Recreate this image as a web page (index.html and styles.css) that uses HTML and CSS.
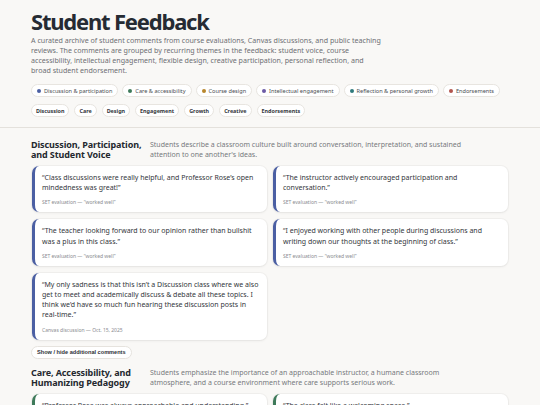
FILE: index.html
```html
<!DOCTYPE html>
<html lang="en">
<head>
    <meta charset="UTF-8">
    <title>Student Feedback</title>
    <link rel="stylesheet" href="styles.css">
</head>
<body>
    <header class="page-header">
        <h1>Student Feedback</h1>
        <p class="intro">A curated archive of student comments from course evaluations, Canvas discussions, and public teaching reviews. The comments are grouped by recurring themes in the feedback: student voice, course accessibility, intellectual engagement, flexible design, creative participation, personal reflection, and broad student endorsement.</p>
        <ul class="legend">
            <li class="chip"><span class="dot blue"></span>Discussion &amp; participation</li>
            <li class="chip"><span class="dot green"></span>Care &amp; accessibility</li>
            <li class="chip"><span class="dot gold"></span>Course design</li>
            <li class="chip"><span class="dot purple"></span>Intellectual engagement</li>
            <li class="chip"><span class="dot teal"></span>Reflection &amp; personal growth</li>
            <li class="chip"><span class="dot red"></span>Endorsements</li>
        </ul>
        <nav class="jump">
            <a href="#" class="chip bold">Discussion</a>
            <a href="#" class="chip bold">Care</a>
            <a href="#" class="chip bold">Design</a>
            <a href="#" class="chip bold">Engagement</a>
            <a href="#" class="chip bold">Growth</a>
            <a href="#" class="chip bold">Creative</a>
            <a href="#" class="chip bold">Endorsements</a>
        </nav>
    </header>

    <main>
        <section class="theme">
            <div class="theme-head">
                <h2>Discussion, Participation, and Student Voice</h2>
                <p>Students describe a classroom culture built around conversation, interpretation, and sustained attention to one another's ideas.</p>
            </div>
            <div class="cards">
                <blockquote class="card blue-edge">
                    <p>“Class discussions were really helpful, and Professor Rose’s open mindedness was great!”</p>
                    <cite>SET evaluation — “worked well”</cite>
                </blockquote>
                <blockquote class="card blue-edge">
                    <p>“The instructor actively encouraged participation and conversation.”</p>
                    <cite>SET evaluation — “worked well”</cite>
                </blockquote>
                <blockquote class="card blue-edge">
                    <p>“The teacher looking forward to our opinion rather than bullshit was a plus in this class.”</p>
                    <cite>SET evaluation — “worked well”</cite>
                </blockquote>
                <blockquote class="card blue-edge">
                    <p>“I enjoyed working with other people during discussions and writing down our thoughts at the beginning of class.”</p>
                    <cite>SET evaluation — “worked well”</cite>
                </blockquote>
                <blockquote class="card blue-edge">
                    <p>“My only sadness is that this isn’t a Discussion class where we also get to meet and academically discuss &amp; debate all these topics. I think we’d have so much fun hearing these discussion posts in real-time.”</p>
                    <cite>Canvas discussion — Oct. 15, 2025</cite>
                </blockquote>
            </div>
            <button class="toggle">Show / hide additional comments</button>
        </section>

        <section class="theme">
            <div class="theme-head">
                <h2>Care, Accessibility, and Humanizing Pedagogy</h2>
                <p>Students emphasize the importance of an approachable instructor, a humane classroom atmosphere, and a course environment where care supports serious work.</p>
            </div>
            <div class="cards">
                <blockquote class="card green-edge">
                    <p>“Professor Rose was always approachable and understanding.”</p>
                    <cite>SET evaluation — “worked well”</cite>
                </blockquote>
                <blockquote class="card green-edge">
                    <p>“The class felt like a welcoming space.”</p>
                    <cite>SET evaluation — “worked well”</cite>
                </blockquote>
            </div>
        </section>
    </main>
</body>
</html>
```

FILE: styles.css
```css
body {
    margin: 0;
    font-family: "Noto Sans", sans-serif;
    color: #2a2d33;
    background-color: #f9f8f6;
}
.page-header {
    padding: 7px 31px 10px;
    border-bottom: 1px solid #e4e1dc;
}
h1 {
    margin: 0;
    font-size: 22px;
    line-height: 28px;
    font-weight: 700;
    color: #262b33;
    letter-spacing: -1.2px;
}
.intro {
    margin: 0 0 9px;
    max-width: 352px;
    font-size: 7.1px;
    line-height: 10px;
    color: #6d6f74;
}
.legend,
.jump {
    display: flex;
    flex-wrap: wrap;
    gap: 4px;
    list-style: none;
    margin: 0;
    padding: 0;
}
.legend {
    margin-bottom: 7px;
}
.jump {
    gap: 5px;
}
.chip {
    display: inline-flex;
    align-items: center;
    gap: 3px;
    height: 13px;
    padding: 0 5px;
    background-color: #fff;
    border: 1px solid #e8e5e0;
    border-radius: 7px;
    font-size: 5.6px;
    color: #4a4d52;
    text-decoration: none;
    box-sizing: border-box;
}
.chip.bold {
    font-weight: 700;
    font-size: 5.4px;
    color: #33363b;
    padding: 0 4px;
}
.dot {
    width: 4px;
    height: 4px;
    border-radius: 50%;
}
.blue { background-color: #4b5fa3; }
.green { background-color: #3e7a5a; }
.gold { background-color: #b8862c; }
.purple { background-color: #6c5aa6; }
.teal { background-color: #2f7a7c; }
.red { background-color: #b2544d; }

main {
    padding: 12px 31px 0;
}
.theme {
    margin-bottom: 9px;
}
.theme-head {
    display: grid;
    grid-template-columns: 119px 1fr;
    margin-bottom: 6px;
}
.theme-head h2 {
    margin: 0;
    font-size: 9px;
    line-height: 10px;
    font-weight: 700;
    color: #24282e;
    letter-spacing: -0.1px;
}
.theme-head p {
    margin: 0;
    max-width: 320px;
    font-size: 7px;
    line-height: 10px;
    color: #77797d;
}
.cards {
    display: grid;
    grid-template-columns: 235px 235px;
    gap: 7px 6px;
    align-items: start;
    margin-left: 1px;
}
.card {
    margin: 0;
    padding: 7px 8px 6px 7px;
    background-color: #fff;
    border-radius: 7px;
    border-left: 3px solid #4b5fa3;
    box-shadow: 0 1px 3px rgba(0, 0, 0, 0.06), 0 0 0 1px rgba(0, 0, 0, 0.03);
}
.green-edge {
    border-left-color: #3e7a5a;
}
.card p {
    margin: 0 0 5px;
    font-size: 7px;
    line-height: 10.2px;
    color: #33363b;
}
.card cite {
    display: block;
    font-style: normal;
    font-size: 5px;
    line-height: 8px;
    color: #8a8c90;
}
.toggle {
    display: block;
    margin-top: 6px;
    height: 13px;
    padding: 0 5px;
    background-color: #fff;
    border: 1px solid #e6e3de;
    border-radius: 7px;
    font-family: "Liberation Sans", Arial, sans-serif;
    font-weight: 700;
    font-size: 5.6px;
    color: #2e3136;
}
```
